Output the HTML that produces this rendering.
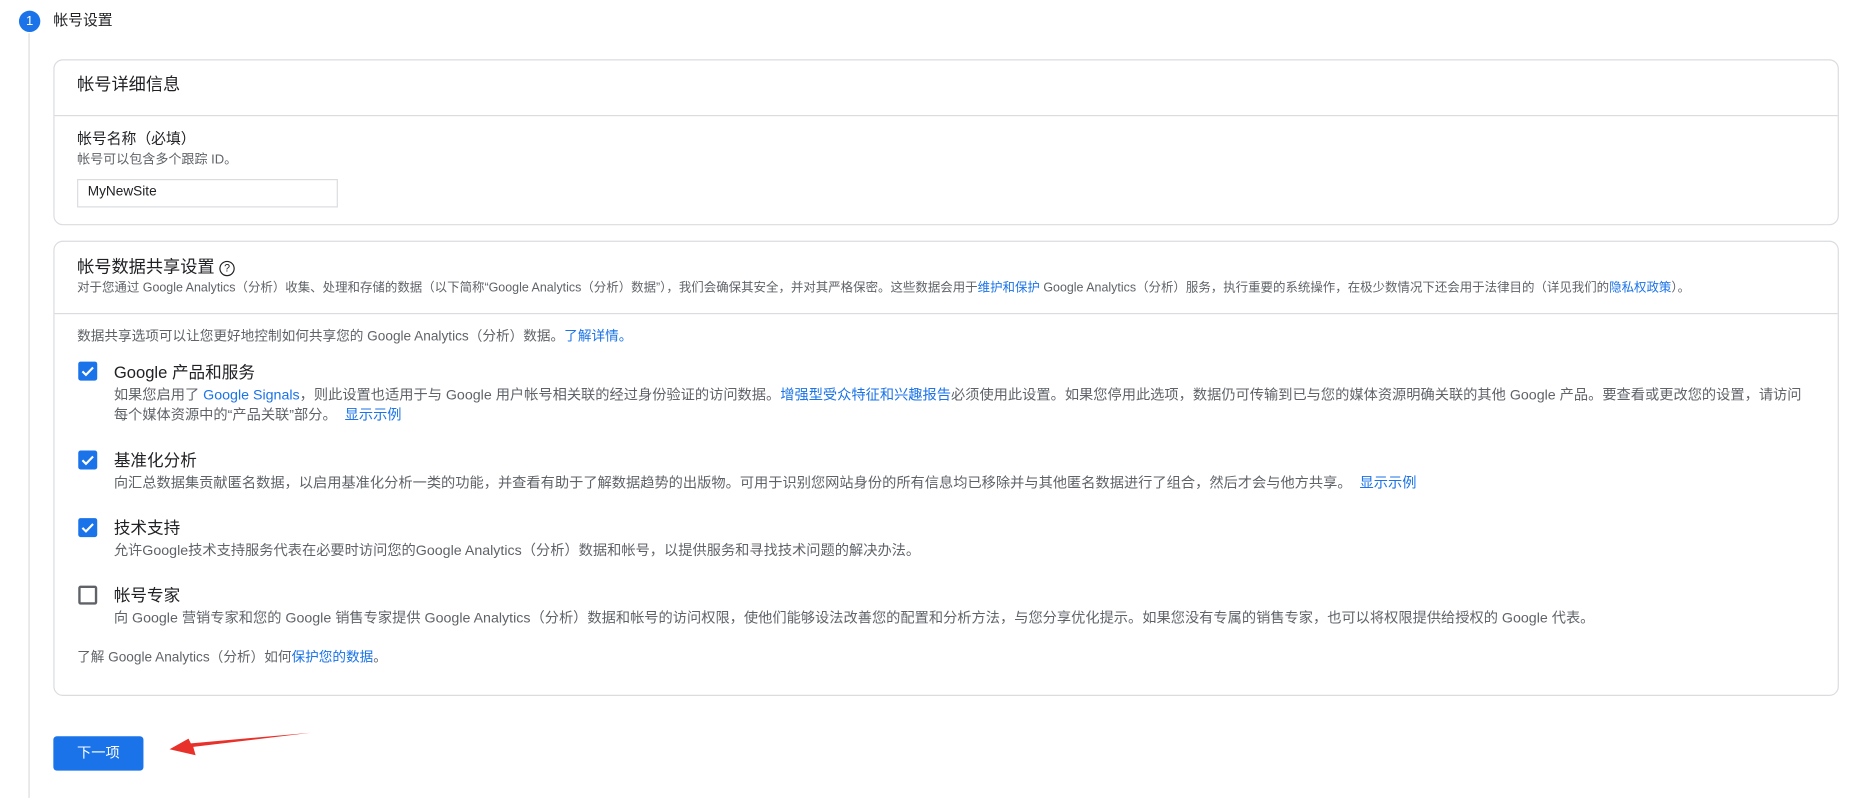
<!DOCTYPE html>
<html><head><meta charset="utf-8"><style>
html,body{margin:0;padding:0;background:#fff;width:1859px;height:798px;overflow:hidden}
#w{position:absolute;left:0;top:0;width:1568px;height:673px;transform:scale(1.1856);transform-origin:0 0;font-family:"Liberation Sans","Noto Sans CJK SC",sans-serif;color:#202124}
.a{position:absolute;white-space:nowrap;line-height:1}
.card{position:absolute;left:45px;width:1506px;border:1px solid #dadce0;border-radius:8px;box-sizing:border-box}
.g{color:#5f6368}
.l{color:#1a73e8}
.cb{position:absolute;left:66px;width:16px;height:16px;border-radius:2px;background:#1a73e8}
.cb svg{position:absolute;left:0;top:0}
.h{font-size:14px}
.d{font-size:12px;color:#5f6368}
</style></head><body><div id="w">
<div style="position:absolute;left:24px;top:28px;width:1px;height:645px;background:#dadce0"></div>
<div style="position:absolute;left:16px;top:9px;width:18px;height:18px;border-radius:50%;background:#1a73e8;color:#fff;font-size:11px;text-align:center;line-height:18px">1</div>
<div class="a" style="left:45px;top:11px;font-size:12.5px">帐号设置</div>

<div class="card" style="top:50px;height:140px">
 <div style="position:absolute;left:0;right:0;top:46px;height:1px;background:#dadce0"></div>
</div>
<div class="a" style="left:65px;top:65px;font-size:14.5px">帐号详细信息</div>
<div class="a" style="left:65px;top:111px;font-size:12.5px">帐号名称（必填）</div>
<div class="a g" style="left:65px;top:130px;font-size:11px">帐号可以包含多个跟踪 ID。</div>
<div style="position:absolute;left:65px;top:151px;width:220px;height:24px;border:1px solid #dadce0;box-sizing:border-box"></div>
<div class="a" style="left:74px;top:157px;font-size:11.5px">MyNewSite</div>

<div class="card" style="top:203px;height:384px">
 <div style="position:absolute;left:0;right:0;top:60px;height:1px;background:#dadce0"></div>
</div>
<div class="a" style="left:65px;top:219px;font-size:14.5px">帐号数据共享设置 <span style="display:inline-block;width:11px;height:11px;border:1.3px solid #202124;border-radius:50%;font-size:9px;text-align:center;line-height:11px;vertical-align:1px">?</span></div>
<div class="a g" style="left:65px;top:238px;font-size:10.5px">对于您通过 Google Analytics（分析）收集、处理和存储的数据（以下简称“Google Analytics（分析）数据”），我们会确保其安全，并对其严格保密。这些数据会用于<span class="l">维护和保护</span> Google Analytics（分析）服务，执行重要的系统操作，在极少数情况下还会用于法律目的（详见我们的<span class="l">隐私权政策</span>）。</div>
<div class="a g" style="left:65px;top:279px;font-size:11.5px">数据共享选项可以让您更好地控制如何共享您的 Google Analytics（分析）数据。<span class="l">了解详情。</span></div>

<div class="cb" style="top:305px"><svg width="16" height="16"><path d="M3.5 8.2l3 3 6-6.2" stroke="#fff" stroke-width="1.8" fill="none"/></svg></div>
<div class="a h" style="left:96px;top:307px">Google 产品和服务</div>
<div class="a d" style="left:96px;top:327px">如果您启用了 <span class="l">Google Signals</span>，则此设置也适用于与 Google 用户帐号相关联的经过身份验证的访问数据。<span class="l">增强型受众特征和兴趣报告</span>必须使用此设置。如果您停用此选项，数据仍可传输到已与您的媒体资源明确关联的其他 Google 产品。要查看或更改您的设置，请访问</div>
<div class="a d" style="left:96px;top:344px">每个媒体资源中的“产品关联”部分。 &nbsp;<span class="l">显示示例</span></div>

<div class="cb" style="top:380px"><svg width="16" height="16"><path d="M3.5 8.2l3 3 6-6.2" stroke="#fff" stroke-width="1.8" fill="none"/></svg></div>
<div class="a h" style="left:96px;top:381px">基准化分析</div>
<div class="a d" style="left:96px;top:401px">向汇总数据集贡献匿名数据，以启用基准化分析一类的功能，并查看有助于了解数据趋势的出版物。可用于识别您网站身份的所有信息均已移除并与其他匿名数据进行了组合，然后才会与他方共享。 &nbsp;<span class="l">显示示例</span></div>

<div class="cb" style="top:437px"><svg width="16" height="16"><path d="M3.5 8.2l3 3 6-6.2" stroke="#fff" stroke-width="1.8" fill="none"/></svg></div>
<div class="a h" style="left:96px;top:438px">技术支持</div>
<div class="a d" style="left:96px;top:458px">允许Google技术支持服务代表在必要时访问您的Google Analytics（分析）数据和帐号，以提供服务和寻找技术问题的解决办法。</div>

<div style="position:absolute;left:66px;top:494px;width:16px;height:16px;border:2px solid #5f6368;border-radius:2px;box-sizing:border-box"></div>
<div class="a h" style="left:96px;top:495px">帐号专家</div>
<div class="a d" style="left:96px;top:515px">向 Google 营销专家和您的 Google 销售专家提供 Google Analytics（分析）数据和帐号的访问权限，使他们能够设法改善您的配置和分析方法，与您分享优化提示。如果您没有专属的销售专家，也可以将权限提供给授权的 Google 代表。</div>

<div class="a g" style="left:65px;top:550px;font-size:11.5px">了解 Google Analytics（分析）如何<span class="l">保护您的数据</span>。</div>

<div style="position:absolute;left:45px;top:621px;width:76px;height:29px;background:#1a73e8;border-radius:3px;color:#fff;font-size:12px;text-align:center;line-height:29px">下一项</div>
<svg style="position:absolute;left:0;top:0" width="400" height="673"><path d="M262 618 L163 630 L165 637 L143 632 L159 623 L161 627 Z" fill="#e8312a"/></svg>
</div></body></html>
